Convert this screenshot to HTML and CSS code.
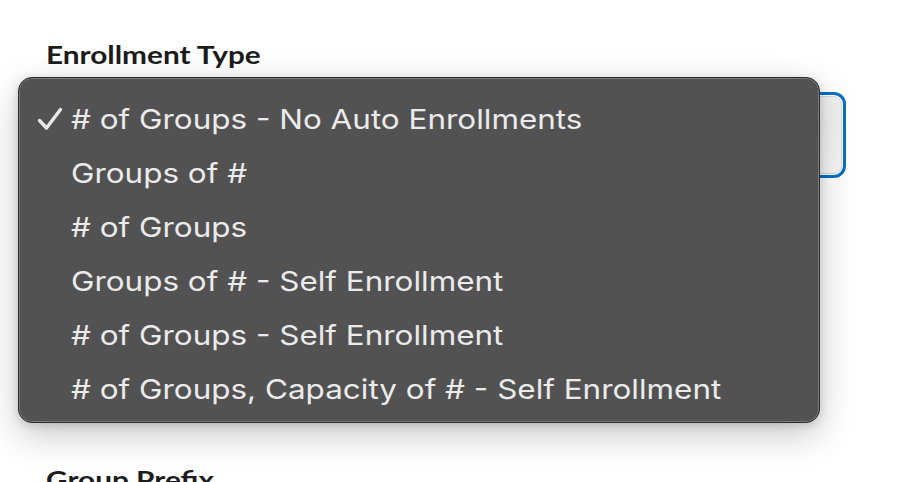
FILE: index.html
```html
<!DOCTYPE html>
<html>
<head>
<meta charset="utf-8">
<link rel="stylesheet" href="styles.css">
</head>
<body>
<div class="form">
  <div class="field">
    <label class="field-label"><span class="wide">Enrollment Type</span></label>
    <div class="select-wrap">
      <div class="select-ring"><div class="select-box"></div></div>
      <ul class="menu">
        <li class="item checked"><span class="check"><svg width="26" height="26" viewBox="0 0 26 26"><path d="M2.5 14.5 L9.5 22 L23.5 3.5" fill="none" stroke="#e8e8e8" stroke-width="3.4" stroke-linecap="round" stroke-linejoin="round"/></svg></span><span class="txt"># of Groups - No Auto Enrollments</span></li>
        <li class="item"><span class="check"></span><span class="txt">Groups of #</span></li>
        <li class="item"><span class="check"></span><span class="txt"># of Groups</span></li>
        <li class="item"><span class="check"></span><span class="txt">Groups of # - Self Enrollment</span></li>
        <li class="item"><span class="check"></span><span class="txt"># of Groups - Self Enrollment</span></li>
        <li class="item"><span class="check"></span><span class="txt"># of Groups, Capacity of # - Self Enrollment</span></li>
      </ul>
    </div>
  </div>
  <div class="field field-prefix">
    <label class="field-label"><span class="wide">Group Prefix</span></label>
  </div>
</div>
</body>
</html>
```
FILE: styles.css
```css
html, body {
  margin: 0;
  padding: 0;
  background: #ffffff;
  overflow: hidden;
}
body {
  width: 924px;
  height: 482px;
  font-family: "Inter", "Liberation Sans", sans-serif;
}
.form {
  padding: 37px 0 0 46px;
}
.field-label {
  display: block;
  font-family: "Lato", "Liberation Sans", sans-serif;
  font-weight: 700;
  font-size: 25px;
  line-height: 34px;
  color: #1c1c1c;
}
.wide {
  display: inline-block;
  transform: scaleX(1.19);
  transform-origin: left center;
}
.select-wrap {
  position: relative;
  margin-top: 21px;
  width: 800px;
}
.select-ring {
  height: 78px;
  border: 3px solid #0a6ec8;
  border-radius: 12px;
  padding: 1px;
}
.select-box {
  height: 76px;
  border: 1px solid #d9d9d9;
  border-radius: 9px;
  background: linear-gradient(#f1f1f1, #f7f7f7);
}
.menu {
  position: absolute;
  left: -28px;
  top: -15px;
  width: 802px;
  height: 346px;
  margin: 0;
  padding: 14px 0 0 0;
  box-sizing: border-box;
  list-style: none;
  background: #525252;
  border: 1px solid #2e2e2e;
  border-radius: 14px;
  box-shadow: inset 0 0 0 1px rgba(255,255,255,0.22), 0 12px 36px rgba(0,0,0,0.22), 0 2px 8px rgba(0,0,0,0.15);
}
.item {
  display: flex;
  align-items: center;
  height: 54px;
  font-size: 27.5px;
  color: #ebebeb;
  white-space: nowrap;
}
.txt {
  display: inline-block;
  transform: scaleX(1.143);
  transform-origin: left center;
}
.check {
  display: flex;
  align-items: center;
  justify-content: flex-start;
  width: 52px;
  padding-left: 18px;
  box-sizing: border-box;
  flex: none;
  height: 26px;
}
.field-prefix {
  margin-top: 284px;
}
```
